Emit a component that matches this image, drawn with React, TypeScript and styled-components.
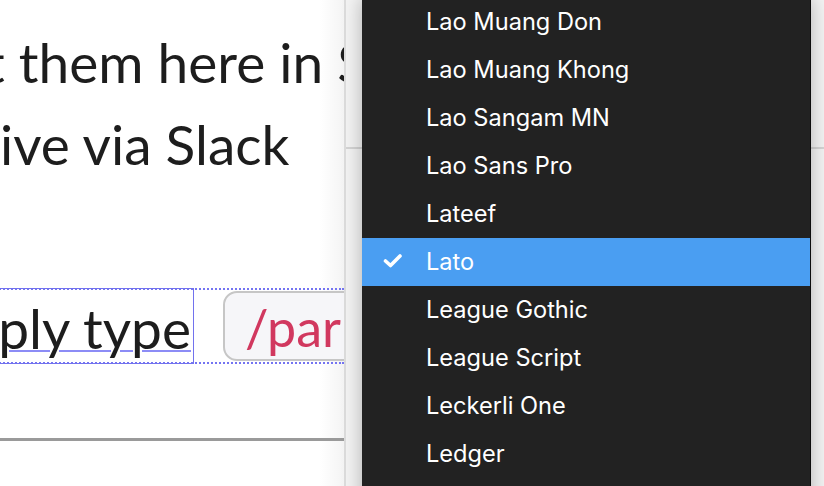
import React from "react";
import styled, { createGlobalStyle } from "styled-components";

const GlobalStyle = createGlobalStyle`
  html, body {
    margin: 0;
    padding: 0;
    overflow: hidden;
    background: #fff;
  }
`;

const Page = styled.div`
  position: relative;
  display: flex;
  width: 824px;
  height: 486px;
  overflow: hidden;
`;

const Canvas = styled.div`
  flex: none;
  width: 344px;
  height: 100%;
  overflow: hidden;
  background: linear-gradient(90deg, #fff 0, #fff 320px, #f4f4f4 344px);
  color: #1d1d1d;
  font-family: Lato, "Open Sans", sans-serif;
`;

const Line = styled.div<{ $shift: number; $top?: number }>`
  margin-top: ${(p) => p.$top ?? 0}px;
  margin-left: ${(p) => p.$shift}px;
  font-size: 55px;
  line-height: 82px;
  white-space: nowrap;
`;

const BlockRow = styled.div`
  display: flex;
  align-items: center;
  margin-top: 103px;
  margin-left: -220px;
  height: 72px;
  border-top: 2px dotted #7474f2;
  border-bottom: 2px dotted #7474f2;
  white-space: nowrap;
`;

const SelectedText = styled.div`
  flex: none;
  box-sizing: border-box;
  width: 414px;
  height: 76px;
  margin: -2px 0;
  border: 1.5px solid #7272ee;
  display: flex;
  align-items: center;
  justify-content: flex-end;
  padding-right: 2px;
  padding-top: 3px;
  font-size: 55px;

  span {
    text-decoration: underline;
    text-decoration-color: #8c8cf6;
    text-decoration-thickness: 2px;
    text-underline-offset: 1px;
  }
`;

const Chip = styled.div`
  flex: none;
  margin-left: 29px;
  box-sizing: border-box;
  height: 70px;
  padding: 0 20px;
  padding-top: 2px;
  display: flex;
  align-items: center;
  border: 2px solid #c6c6c6;
  border-radius: 14px;
  background: #f6f6f9;
  color: #d1385f;
  font-size: 52px;
`;

const Rule = styled.div`
  margin-top: 74px;
  height: 3px;
  background: #9a9a9a;
`;

const Sidebar = styled.div`
  flex: 1;
  border-left: 2px solid #dcdcdc;
  background: #f3f3f3;
`;

const SidebarHeader = styled.div`
  height: 147px;
  border-bottom: 2px solid #d4d4d4;
`;

const Menu = styled.ul`
  position: absolute;
  left: 362px;
  top: -2px;
  width: 448px;
  margin: 0;
  padding: 0;
  list-style: none;
  background: #222;
  border-right: 1px solid #0c0c0c;
  box-shadow: 0 0 18px rgba(0, 0, 0, 0.28);
  font-family: Inter, "Noto Sans", sans-serif;
  font-size: 23.6px;
  color: #fff;
`;

const Item = styled.li<{ $active?: boolean }>`
  display: flex;
  align-items: center;
  box-sizing: border-box;
  height: 48px;
  padding-bottom: 2px;
  background: ${(p) => (p.$active ? "#4a9ef2" : "transparent")};
  white-space: nowrap;
`;

const CheckSlot = styled.span`
  flex: none;
  width: 64px;
  display: flex;
  justify-content: center;
  padding-right: 2px;
  box-sizing: border-box;
`;

const Check = () => (
  <svg width="20" height="16" viewBox="0 0 20 16" fill="none">
    <path d="M2.5 8 L7.5 12.5 L17 3" stroke="#fff" strokeWidth="3.6" strokeLinecap="round" strokeLinejoin="round" />
  </svg>
);

const fonts = [
  "Lao Muang Don",
  "Lao Muang Khong",
  "Lao Sangam MN",
  "Lao Sans Pro",
  "Lateef",
  "Lato",
  "League Gothic",
  "League Script",
  "Leckerli One",
  "Ledger",
  "Lekton",
];

export default function App() {
  const selected = "Lato";
  return (
    <Page>
      <GlobalStyle />
      <Canvas>
        <Line $shift={-15} $top={21}>t them here in Slack</Line>
        <Line $shift={0}>ive via Slack</Line>
        <BlockRow>
          <SelectedText>
            <span>Or simply type</span>
          </SelectedText>
          <Chip>/parrot</Chip>
        </BlockRow>
        <Rule />
      </Canvas>
      <Sidebar>
        <SidebarHeader />
      </Sidebar>
      <Menu>
        {fonts.map((f) => (
          <Item key={f} $active={f === selected}>
            <CheckSlot>{f === selected && <Check />}</CheckSlot>
            {f}
          </Item>
        ))}
      </Menu>
    </Page>
  );
}
